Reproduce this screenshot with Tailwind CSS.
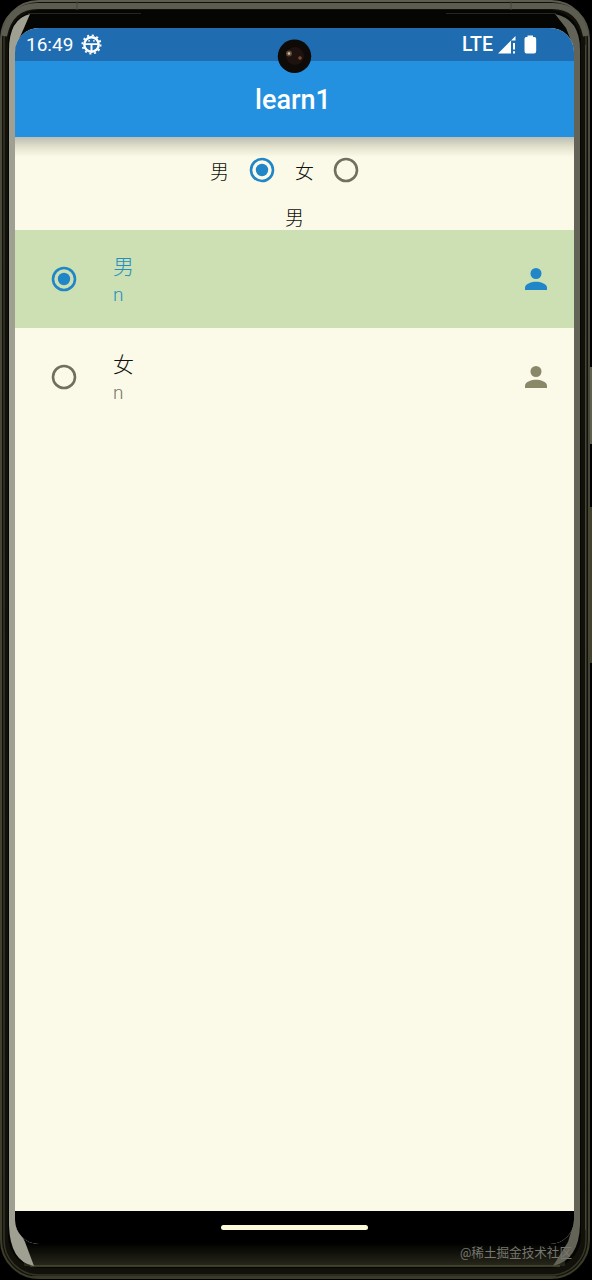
<!DOCTYPE html>
<html lang="zh">
<head>
<meta charset="utf-8">
<title>learn1</title>
<script src="https://cdn.jsdelivr.net/npm/@tailwindcss/browser@4"></script>
</head>
<body class="bg-black">
<div class="relative w-[592px] h-[1280px] overflow-hidden bg-black pl-[15px] pr-[18px] pt-[28px] font-['Roboto','Noto_Sans_CJK_SC',sans-serif]">
  <!-- phone body -->
  <svg class="absolute inset-0" width="592" height="1280" viewBox="0 0 592 1280" fill="none">
    <defs>
      <linearGradient id="bot" x1="0" y1="0" x2="0" y2="1"><stop offset="0" stop-color="#000"/><stop offset="1" stop-color="#28281b"/></linearGradient>
      <linearGradient id="rim" x1="0" y1="0" x2="0" y2="1"><stop offset="0" stop-color="#5c5c50"/><stop offset=".04" stop-color="#4c4c3c"/><stop offset="1" stop-color="#3c3c28"/></linearGradient>
    </defs>
    <rect x="588" y="367" width="6" height="77" fill="#5f5f50"/>
    <rect x="588" y="507" width="6" height="156" fill="#41412a"/>
    <rect x="1" y="1" width="588" height="1277" rx="38" fill="#11110a" stroke="url(#rim)" stroke-width="2"/>
    <rect x="4" y="4" width="582" height="1271" rx="35" stroke="#34342a" stroke-width="1.5"/>
    <path d="M4 36Q10 6 38 6H552Q580 6 586 36" stroke="#5c5c51" stroke-width="6"/>
    <rect x="8" y="10" width="573" height="1258" rx="32" fill="#050504"/>
    <path d="M24 1243H565V1266H24Z" fill="url(#bot)"/>
    <path d="M30 1266H560" stroke="#4c4c34" stroke-width="1.5"/>
    <path d="M32 1277H556" stroke="#3a3a26" stroke-width="2"/>
    <path d="M30 14Q9 19 9 50V1225Q10 1262 34 1266L25 1242L15 1222V48L24 28Z" fill="#a0a092"/>
    <path d="M555 14Q580 19 580 50V1225Q579 1260 553 1266L568 1242L574 1222V48L566 28Z" fill="#636357"/>
    <path d="M585.500 45V1230" stroke="#45453a"/>
    <path d="M77 1V10M511 1V10" stroke="#44443a"/>
    <path d="M28 13.500H141M446 13.500H556" stroke="#272720"/>
  </svg>

  <main class="relative w-[559px] h-[1216px] rounded-[24px] overflow-hidden bg-[#fbfae9] flex flex-col">
    <!-- status bar -->
    <div class="h-[33px] shrink-0 bg-[#1f6cb1] text-white flex items-center pl-[11px] pr-[37px] text-[19px]">
      <span class="w-[49px] pt-[1px]">16:49</span>
      <svg class="ml-[6px]" width="21" height="21" viewBox="0 0 21 21" fill="none" stroke="#fff">
        <circle cx="10.500" cy="10.500" r="7.200" stroke-width="2.400"/>
        <circle cx="10.500" cy="10.500" r="9.100" stroke-width="1.800" stroke-dasharray="2.100 2.664"/>
        <path d="M4 10.200H17" stroke-width="1.700"/><path d="M10.500 10V17.500" stroke-width="2"/>
        <path d="M7.200 6.800H9M12 6.800H13.800" stroke-width="1.300"/>
      </svg>
      <span class="ml-auto mr-[5px] text-[19.500px] font-medium">LTE</span>
      <svg width="18" height="18" viewBox="0 0 18 18" fill="#fff"><path d="M0 17.500L17.500 0V4.500H13V17.500ZM15 7H17V13.500H15ZM15 15.300H17V17.500H15Z"/></svg>
      <svg class="ml-[8px]" width="13" height="19" viewBox="0 0 13 19" fill="#fff"><path d="M3.500 2V.5H9V2H10.500Q12.200 2 12.200 4V16Q12.200 18.500 10 18.500H2.500Q.5 18.500.5 16V4Q.5 2 2.300 2Z"/></svg>
    </div>
    <!-- app bar -->
    <header class="h-[76px] shrink-0 bg-[#2391e0] text-white flex items-center justify-center text-[27px] font-medium pt-[2px] pr-[3px]">learn1</header>
    <div class="h-[20px] shrink-0 bg-linear-to-b from-[#bcbcb4] via-[#e2e2cc] to-[#fbfae9]"></div>

    <!-- inline radios -->
    <div class="h-[31px] shrink-0 flex items-center pl-[195px] text-[19px] font-light text-[#10100c]">
      <span class="leading-none">男</span>
      <svg class="ml-[20px] -mt-[6px]" width="26" height="26" viewBox="0 0 26 26"><circle cx="13" cy="13" r="11" fill="none" stroke="#2086c8" stroke-width="2.600"/><circle cx="13" cy="13" r="6.200" fill="#2086c8"/></svg>
      <span class="ml-[20px] leading-none">女</span>
      <svg class="ml-[19px] -mt-[6px]" width="26" height="26" viewBox="0 0 26 26"><circle cx="13" cy="13" r="11" fill="none" stroke="#707060" stroke-width="2.600"/></svg>
    </div>
    <div class="h-[42px] shrink-0 pt-[21px] text-center text-[19px] leading-[19px] font-light text-[#10100c]">男</div>

    <!-- list tiles -->
    <div class="h-[98px] shrink-0 bg-[#cde0b3] text-[#2590c0] flex items-center pl-[36px] pr-[26px]">
      <svg width="26" height="26" viewBox="0 0 26 26"><circle cx="13" cy="13" r="11" fill="none" stroke="#2086c8" stroke-width="2.600"/><circle cx="13" cy="13" r="6.200" fill="#2086c8"/></svg>
      <div class="ml-[36px] grow pt-[4px]">
        <div class="text-[21px] leading-[28px] font-light">男</div>
        <div class="text-[19px] leading-[28px] font-light">n</div>
      </div>
      <svg width="24" height="24" viewBox="0 0 24 24" fill="#2086c8"><circle cx="12" cy="6.500" r="5.500"/><path d="M1 23V20.500C1 16.800 8 14.800 12 14.800S23 16.800 23 20.500V23Z"/></svg>
    </div>
    <div class="h-[98px] shrink-0 text-[#77776a] flex items-center pl-[36px] pr-[26px]">
      <svg width="26" height="26" viewBox="0 0 26 26"><circle cx="13" cy="13" r="11" fill="none" stroke="#707060" stroke-width="2.600"/></svg>
      <div class="ml-[36px] grow pt-[4px]">
        <div class="text-[21px] leading-[28px] font-light text-[#10100c]">女</div>
        <div class="text-[19px] leading-[28px] font-light">n</div>
      </div>
      <svg width="24" height="24" viewBox="0 0 24 24" fill="#89896a"><circle cx="12" cy="6.500" r="5.500"/><path d="M1 23V20.500C1 16.800 8 14.800 12 14.800S23 16.800 23 20.500V23Z"/></svg>
    </div>

    <!-- gesture bar -->
    <div class="mt-auto h-[33px] shrink-0 bg-black flex justify-center pt-[14px]">
      <div class="w-[147px] h-[5px] rounded-full bg-[#fbfad8]"></div>
    </div>
  </main>

  <!-- camera -->
  <svg class="absolute left-[277px] top-[39px]" width="35" height="35" viewBox="0 0 35 35"><circle cx="17.500" cy="17.300" r="16.700" fill="#0d0a08"/><circle cx="18" cy="17" r="9" fill="#1d120d"/><circle cx="12" cy="14.500" r="3" fill="#5b4937"/><circle cx="12" cy="14.500" r="1.300" fill="#c9c1ad"/><circle cx="23" cy="19" r="1.800" fill="#7b4a36"/></svg>
  <!-- watermark -->
  <div class="absolute left-[460px] top-[1244px] text-[12.600px] leading-[18px] whitespace-nowrap text-[#77776f]">@稀土掘金技术社区</div>
</div>
</body>
</html>
